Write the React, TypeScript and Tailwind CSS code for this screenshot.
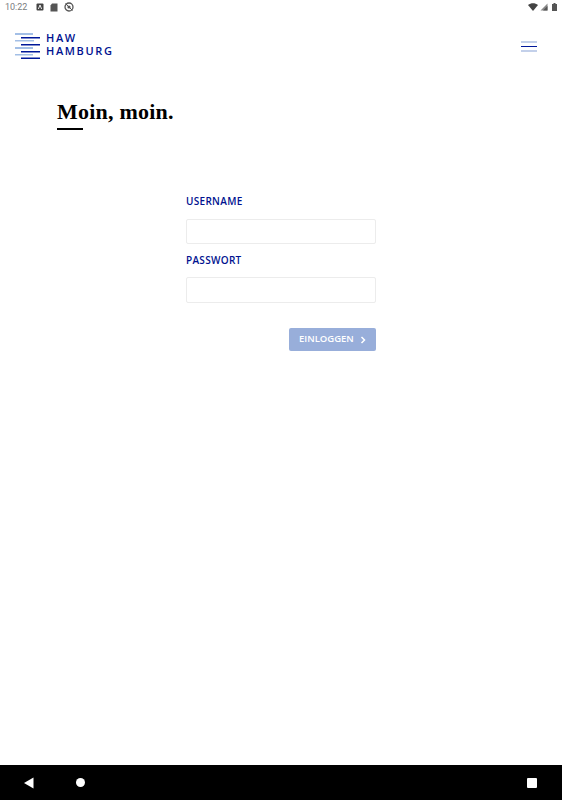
function Logo() {
  return (
    <svg width="26" height="30" viewBox="0 0 26 30" className="shrink-0">
      <rect x="0" y="4" width="18" height="2" fill="#a3bfe6" />
      <rect x="6" y="8" width="19" height="1.500" fill="#00189a" />
      <rect x="0" y="11" width="19" height="1.500" fill="#a3bfe6" />
      <rect x="6" y="15" width="19" height="1.500" fill="#00189a" />
      <rect x="0" y="18" width="18" height="2" fill="#a3bfe6" />
      <rect x="6" y="22" width="19" height="1.500" fill="#00189a" />
      <rect x="0" y="25" width="18" height="1.500" fill="#a3bfe6" />
      <rect x="6" y="28.500" width="19" height="1.500" fill="#00189a" />
    </svg>
  )
}

function StatusBar() {
  return (
    <div className="flex h-[14px] shrink-0 items-center justify-between pl-[5px] pr-[5px] text-[#7a7d80]">
      <div className="flex items-center">
        <span className="w-[31px] text-[9px] leading-none font-['Roboto',sans-serif]">10:22</span>
        <svg width="8" height="8" viewBox="0 0 8 8" className="mr-[6px]">
          <rect width="7" height="7" x="0.5" y="0.5" rx="1" fill="#444" />
          <path d="M2.4 6 4 2l1.6 4" stroke="#fff" strokeWidth="0.9" fill="none" />
        </svg>
        <svg width="8" height="9" viewBox="0 0 8 9" className="mr-[6px]">
          <path d="M2 .5h5.5v8H.5V2.500z" fill="#555" />
        </svg>
        <svg width="10" height="10" viewBox="0 0 10 10">
          <circle cx="5" cy="5" r="4" fill="none" stroke="#555" strokeWidth="1.3" />
          <circle cx="5" cy="5" r="1.6" fill="#555" />
          <path d="M1.500 1.500 8.500 8.500" stroke="#555" strokeWidth="1" />
        </svg>
      </div>
      <div className="flex items-center gap-[2px]">
        <svg width="10" height="8" viewBox="0 0 10 8">
          <path d="M0 2 C3 -.5 7 -.5 10 2 L5 8z" fill="#444" />
        </svg>
        <svg width="8" height="8" viewBox="0 0 8 8">
          <path d="M7.500.5v7H.5z" fill="#8a8a8a" />
          <path d="M7.500 3v4.500H3z" fill="#555" />
        </svg>
        <svg width="5" height="8" viewBox="0 0 5 8" className="ml-[2px]">
          <path d="M1.500 0h2v1H5v7H0V1h1.500z" fill="#555" />
        </svg>
      </div>
    </div>
  )
}

function Field({ label, inputClass }: { label: string; inputClass: string }) {
  return (
    <div>
      <label className="block text-[10px] leading-[14px] font-semibold tracking-[0.03em] text-[#00128f]">{label}</label>
      <input
        type="text"
        className={`block w-full rounded-[2px] border border-[#ececec] bg-white ${inputClass}`}
      />
    </div>
  )
}

export default function App() {
  return (
    <div className="flex h-[800px] flex-col bg-white font-['Open_Sans',sans-serif]">
      <StatusBar />

      <header className="flex h-[46px] shrink-0 items-center justify-between pl-[15px] pr-[25px] pt-[14px]">
        <div className="flex items-center gap-[5px]">
          <Logo />
          <div className="text-[11px] leading-[13px] font-semibold tracking-[0.15em] text-[#00128f]">
            <div>HAW</div>
            <div>HAMBURG</div>
          </div>
        </div>
        <button type="button" className="mt-[5px] flex w-[16px] flex-col gap-[3px]">
          <span className="h-[2px] bg-[#c3d0ea]" />
          <span className="h-px bg-[#00189a]" />
          <span className="h-[2px] bg-[#c3d0ea]" />
        </button>
      </header>

      <main className="flex-1">
        <div className="pl-[57px] pt-[39px]">
          <h1 className="text-[22px] leading-[26px] font-bold tracking-[0.01em] text-black font-['Liberation_Serif',serif]">Moin, moin.</h1>
          <div className="mt-[3px] h-[2px] w-[26px] bg-black" />
        </div>

        <form className="ml-[186px] mt-[64px] w-[190px]">
          <div className="flex flex-col gap-[9px]">
            <Field label="USERNAME" inputClass="mt-[11px] h-[25px]" />
            <Field label="PASSWORT" inputClass="mt-[10px] h-[26px]" />
          </div>
          <div className="mt-[25px] flex justify-end">
            <button
              type="button"
              className="flex h-[23px] w-[87px] items-center justify-between rounded-[2px] bg-[#98aeda] pl-[10px] pr-[10px] text-[9.5px] font-semibold text-white"
            >
              EINLOGGEN
              <svg width="6" height="8" viewBox="0 0 6 8">
                <path d="M1.500 1 4.500 4l-3 3" fill="none" stroke="#fff" strokeWidth="1.500" />
              </svg>
            </button>
          </div>
        </form>
      </main>

      <nav className="flex h-[35px] shrink-0 items-center bg-black pl-[24px] pr-[25px]">
        <svg width="10" height="12" viewBox="0 0 10 12">
          <path d="M0 6 9.500 .5v11z" fill="#fff" />
        </svg>
        <span className="ml-[42px] h-[9px] w-[9px] rounded-full bg-white" />
        <span className="ml-auto h-[10px] w-[10px] rounded-[1px] bg-white" />
      </nav>
    </div>
  )
}
